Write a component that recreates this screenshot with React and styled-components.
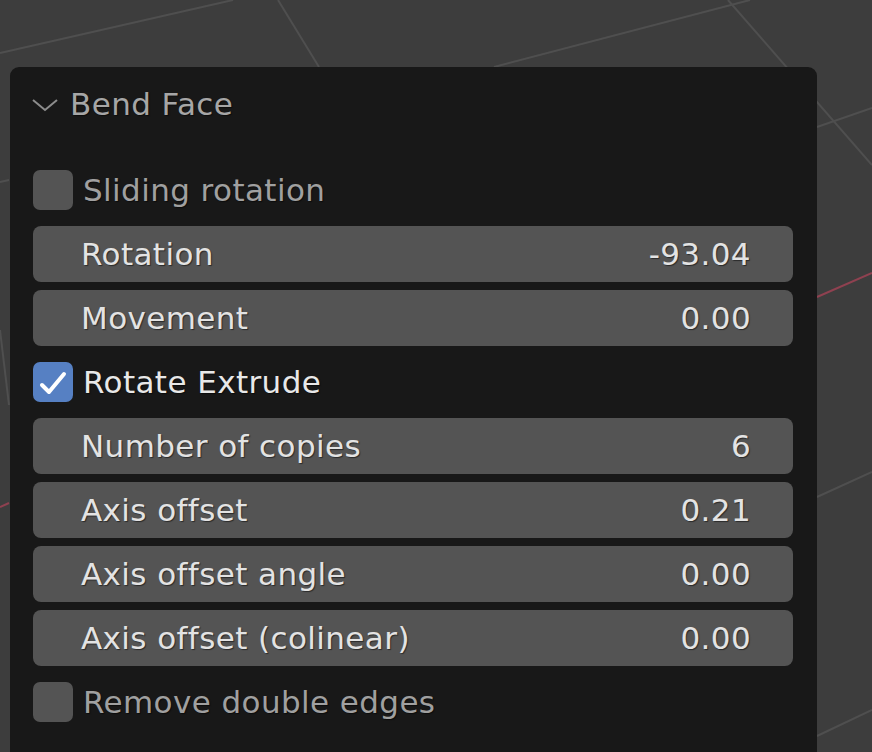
import React from "react";
import styled, { createGlobalStyle } from "styled-components";

const GlobalStyle = createGlobalStyle`
  html, body {
    margin: 0;
    padding: 0;
    background: #3d3d3d;
  }
  body {
    font-family: "DejaVu Sans", "Liberation Sans", sans-serif;
  }
`;

const rows = [
  { kind: "check", label: "Sliding rotation", checked: false },
  { kind: "field", label: "Rotation", value: "-93.04" },
  { kind: "field", label: "Movement", value: "0.00" },
  { kind: "check", label: "Rotate Extrude", checked: true },
  { kind: "field", label: "Number of copies", value: "6" },
  { kind: "field", label: "Axis offset", value: "0.21" },
  { kind: "field", label: "Axis offset angle", value: "0.00" },
  { kind: "field", label: "Axis offset (colinear)", value: "0.00" },
  { kind: "check", label: "Remove double edges", checked: false },
];

// viewport grid lines behind the panel
const gridLines = [
  [0, 53, 233, 0],
  [278, 0, 319, 67],
  [494, 67, 750, 0],
  [728, 0, 872, 165],
  [817, 127, 872, 108],
  [817, 497, 872, 472],
  [817, 736, 872, 710],
  [0, 182, 9, 180],
  [0, 330, 9, 405],
];

function Grid() {
  return (
    <GridSvg width="872" height="752" viewBox="0 0 872 752">
      {gridLines.map(([x1, y1, x2, y2], i) => (
        <line key={i} x1={x1} y1={y1} x2={x2} y2={y2} stroke="#4f4f4f" strokeWidth="2" />
      ))}
      <line x1="817" y1="297" x2="872" y2="273" stroke="#8f4150" strokeWidth="2" />
      <line x1="0" y1="507" x2="9" y2="503" stroke="#8f4150" strokeWidth="2" />
    </GridSvg>
  );
}

function Checkbox({ checked }) {
  return (
    <Box checked={checked}>
      {checked && (
        <svg width="40" height="40" viewBox="0 0 40 40">
          <polyline
            points="9,23 16,30 31,12"
            fill="none"
            stroke="#ffffff"
            strokeWidth="4"
            strokeLinecap="round"
            strokeLinejoin="round"
          />
        </svg>
      )}
    </Box>
  );
}

export default function App() {
  return (
    <>
      <GlobalStyle />
      <Viewport>
        <Grid />
        <Panel>
          <Header>
            <svg width="28" height="14" viewBox="0 0 28 14">
              <polyline points="1,2 13,12 25,2" fill="none" stroke="#8c8c8c" strokeWidth="2" />
            </svg>
            <Title>Bend Face</Title>
          </Header>
          <Body>
            {rows.map((r) =>
              r.kind === "check" ? (
                <CheckRow key={r.label}>
                  <Checkbox checked={r.checked} />
                  <CheckLabel active={r.checked}>{r.label}</CheckLabel>
                </CheckRow>
              ) : (
                <Field key={r.label}>
                  <span>{r.label}</span>
                  <span>{r.value}</span>
                </Field>
              )
            )}
          </Body>
        </Panel>
      </Viewport>
    </>
  );
}

const Viewport = styled.div`
  position: relative;
  width: 872px;
  height: 752px;
  overflow: hidden;
  background: #3d3d3d;
  padding: 67px 0 0 10px;
  box-sizing: border-box;
`;

const GridSvg = styled.svg`
  position: absolute;
  left: 0;
  top: 0;
`;

const Panel = styled.div`
  position: relative;
  width: 807px;
  height: 720px;
  background: #181818;
  border-radius: 9px;
  box-sizing: border-box;
  padding: 0 24px 0 23px;
  font-size: 31px;
  letter-spacing: 0.4px;
`;

const Header = styled.div`
  height: 74px;
  display: flex;
  align-items: center;
  gap: 10px;
  margin-left: -1px;
  svg {
    margin-top: 2px;
  }
`;

const Title = styled.span`
  color: #a6a6a6;
  text-shadow: 1px 1px 1px rgba(0, 0, 0, 0.5);
`;

const Body = styled.div`
  display: flex;
  flex-direction: column;
  gap: 8px;
  padding-top: 21px;
`;

const CheckRow = styled.div`
  height: 56px;
  display: flex;
  align-items: center;
  gap: 10px;
`;

const Box = styled.div`
  width: 40px;
  height: 40px;
  border-radius: 7px;
  background: ${(p) => (p.checked ? "#5680c3" : "#545454")};
  svg {
    display: block;
  }
`;

const CheckLabel = styled.span`
  color: ${(p) => (p.active ? "#e8e8e8" : "#a0a0a0")};
  text-shadow: 1px 1px 1px rgba(0, 0, 0, 0.5);
`;

const Field = styled.div`
  height: 56px;
  display: flex;
  align-items: center;
  justify-content: space-between;
  background: #545454;
  border-radius: 8px;
  padding: 0 42px 0 48px;
  color: #e3e3e3;
  text-shadow: 1px 1px 1px rgba(0, 0, 0, 0.5);
`;
